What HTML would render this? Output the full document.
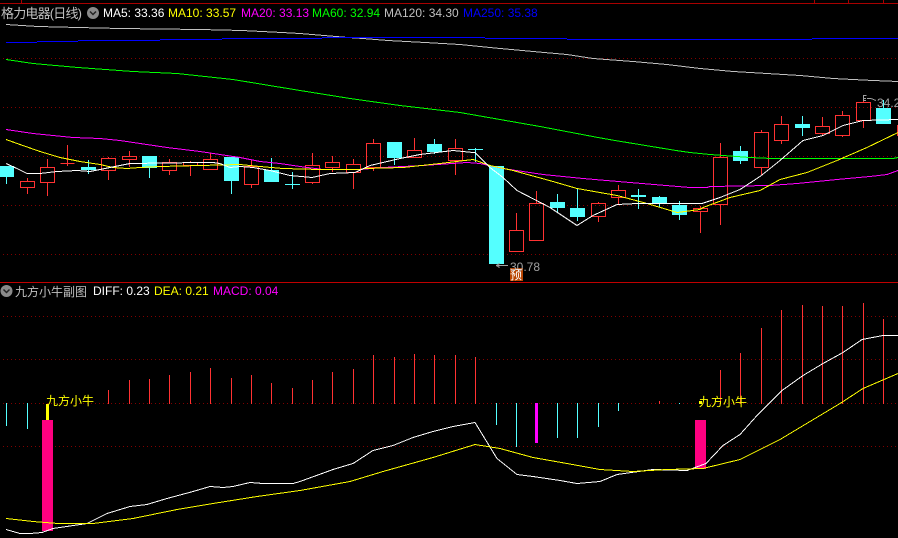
<!DOCTYPE html>
<html lang="zh"><head><meta charset="utf-8"><title>格力电器(日线)</title>
<style>
html,body{margin:0;padding:0;background:#000;width:898px;height:538px;overflow:hidden}
svg{display:block;position:absolute;left:0;top:0}
text{font-family:"Liberation Sans","WenQuanYi Zen Hei","Noto Sans CJK SC",sans-serif;font-size:12px}
.c{font-size:13px}
polyline{fill:none;stroke-width:1}
</style></head><body>
<svg width="898" height="538" viewBox="0 0 898 538" xmlns="http://www.w3.org/2000/svg">
<rect width="898" height="538" fill="#000"/>
<g shape-rendering="crispEdges">
<!-- frame -->
<path d="M0 3.5H898M21.5 0V3M814.5 0V3M848.5 0V3M883.5 0V3" stroke="#a80000" fill="none"/>
<path d="M0 282.5H898" stroke="#c00000" fill="none"/>
<!-- grid -->
<path d="M3 58.5H898M3 107.5H898M3 156.5H898M3 205.5H898M3 254.5H898M3 316.5H898M3 359.5H898M3 403.5H898M3 446.5H898" stroke="#800000" stroke-dasharray="1 3" fill="none"/>
<!-- red candles -->
<path fill="none" stroke="#ff3232" d="M20.5 181.5h14v6h-14zM27.5 178v3M27.5 187v7
M40.5 167.5h14v15h-14zM47.5 159v8M47.5 182v14
M60.5 163.5h14M67.5 145v21
M101.5 158.5h14v12h-14zM108.5 157v1M108.5 170v10
M122.5 156.5h14v3h-14zM129.5 151v5M129.5 159v8
M162.5 162.5h14v8h-14zM169.5 159v3M169.5 170v5
M183.5 162.5h14v3h-14zM190.5 161v1M190.5 165v11
M203.5 159.5h14v10h-14zM210.5 153v6
M244.5 166.5h14v18h-14zM251.5 160v6M251.5 184v4
M305.5 165.5h14v17h-14zM312.5 153v12M312.5 182v2
M325.5 162.5h14v5h-14zM332.5 156v6M332.5 167v5
M346.5 164.5h14v8h-14zM353.5 159v5M353.5 172v17
M366.5 143.5h14v24h-14zM373.5 139v4M373.5 167v4
M407.5 150.5h14v7h-14zM414.5 138v12
M448.5 148.5h14v12h-14zM455.5 139v9M455.5 160v15
M509.5 230.5h14v21h-14zM516.5 213v17
M529.5 203.5h14v37h-14zM536.5 191v12
M591.5 203.5h14v13h-14zM598.5 202v1M598.5 216v6
M611.5 190.5h14v7h-14zM618.5 185v5M618.5 197v8
M693.5 208.5h14v3h-14zM700.5 206v2M700.5 211v22
M713.5 157.5h14v47h-14zM720.5 143v14M720.5 204v21
M754.5 132.5h14v35h-14zM761.5 130v2M761.5 167v8
M774.5 124.5h14v16h-14zM781.5 116v8M781.5 140v4
M815.5 126.5h14v7h-14zM822.5 117v9M822.5 133v3
M835.5 115.5h14v20h-14zM842.5 111v4M842.5 135v2
M856.5 102.5h14v18h-14zM863.5 97v5M863.5 120v8
M897.5 125v11"/>
<!-- cyan candles -->
<path fill="#54ffff" d="M-1 166h15v11h-15zM6 177h1v7h-1z
M81 167h15v3h-15zM88 160h1v14h-1z
M142 156h15v12h-15zM149 168h1v10h-1z
M224 157h15v24h-15zM231 181h1v13h-1z
M264 170h15v12h-15zM271 158h1v12h-1z
M285 184h15v1h-15zM292 172h1v17h-1z
M387 142h15v16h-15zM394 158h1v7h-1z
M427 144h15v8h-15zM434 139h1v15h-1z
M468 149h15v1h-15zM475 148h1v14h-1z
M489 166h15v98h-15z
M550 202h15v6h-15zM557 194h1v19h-1z
M570 208h15v9h-15zM577 188h1v33h-1z
M631 195h15v2h-15zM638 189h1v20h-1z
M652 197h15v7h-15zM659 196h1v11h-1z
M672 205h15v10h-15zM679 201h1v19h-1z
M733 151h15v10h-15zM740 146h1v18h-1z
M795 124h15v4h-15zM802 116h1v20h-1z
M876 108h15v16h-15zM883 100h1v8h-1z"/>
<!-- MA lines -->
<g transform="translate(0 .5)">
<polyline stroke="#c0c0c0" points="6,24 38,26 78,27 120,28 200,29 242,30 282,32 300,33 348,37 363,38 388,40 425,42 460,44 500,48 533,51 567,54 593,58 633,61 667,64 700,68 733,71 767,73 800,75 833,78 873,80 898,81"/>
</g>
<path fill="#0000ff" d="M6 42h31v1h-31zM37 41h41v1h-41zM78 40h82v1h-82zM160 39h62v1h-62zM222 38h100v1h-100zM322 37h163v1h-163zM485 38h82v1h-82zM567 39h245v1h-245zM812 38h86v1h-86z"/>
<g transform="translate(0 .5)">
<polyline stroke="#00ff00" points="6,59 33,63 78,67 133,71 177,73 233,79 300,90 350,98 400,105 460,112 500,119 540,126 598,137 615,140 676,150 690,152 710,154 750,157 772,158 893,158 898,157"/>
<polyline stroke="#ff00ff" points="6,129 33,133 73,137 100,138 120,140 140,143 167,147 200,151 220,154 240,157 260,161 280,163 300,166 323,169 360,169 383,167 423,165 467,162 480,163 503,168 543,174 583,178 630,182 690,187 707,187 710,186 770,185 797,183 837,179 870,176 887,174 898,170"/>
<polyline stroke="#ffff00" points="6,139 20,144 40,151 60,157 80,161 100,164 113,167 127,168 140,167 160,166 200,165 240,164 260,166 283,168 320,169 360,169 365,168 403,167 440,163 473,159 490,165 513,170 553,181 577,188 617,195 647,203 677,212 700,209 703,207 730,197 760,190 780,179 807,172 837,160 867,147 898,132"/>
<polyline stroke="#ffffff" points="6,163 17,168 27,173 40,173 57,171 77,170 90,171 100,169 115,166 130,163 200,162 213,162 220,163 230,167 240,166 253,167 270,170 290,175 312,177 330,173 355,172 370,165 400,158 420,154 453,150 473,152 475,152 490,167 503,177 517,190 550,207 577,225 593,215 617,204 637,203 690,203 702,203 720,197 740,189 760,176 780,160 803,140 823,135 843,125 863,120 898,119"/>
</g>
<!-- price arrows -->
<path d="M496 265.5H508M496.5 265.5l3-2M496.5 265.5l3 2M863.5 95.5h3M863.5 95v6M863 98.5h3M863 100.5h3M867 98.5l4 .01 5 2" stroke="#a0a0a0" fill="none"/>
<rect x="510" y="268" width="13" height="13" fill="#b84400"/>
<!-- MACD bars -->
<path fill="none" stroke="#ff3232" d="M108.5 390V404M129.5 380V404M149.5 379V404M169.5 375V404M190.5 372V404M210.5 368V404M231.5 378V404M251.5 375V404M271.5 383V404M292.5 388V404M312.5 380V404M332.5 372V404M353.5 369V404M373.5 355V404M394.5 357V404M414.5 354V404M434.5 355V404M455.5 355V404M475.5 357V404M659.5 401V404M720.5 370V404M740.5 353V404M761.5 328V404M781.5 310V404M802.5 305V404M822.5 306V404M842.5 306V404M863.5 303V404M883.5 319V404"/>
<path fill="none" stroke="#54ffff" d="M6.5 403V426M27.5 403V429M496.5 403V425M516.5 403V447M557.5 403V438M577.5 403V438M598.5 403V427M618.5 403V411M679.5 403V404"/>
<rect x="535" y="403" width="3" height="40" fill="#ff00ff"/>
<rect x="46" y="404" width="3" height="16" fill="#ffff00"/>
<rect x="42" y="420" width="11" height="111" fill="#ff0080"/>
<rect x="695" y="420" width="11" height="49" fill="#ff0080"/>
<rect x="699" y="401" width="3" height="3" fill="#ffff00"/>
<g transform="translate(0 .5)">
<polyline stroke="#ffffff" points="6,529 20,533 30,533 42,532 53,528 87,523 107,513 130,506 147,504 167,498 193,491 210,486 223,487 233,486 250,482 263,483 293,483 300,481 333,469 353,463 373,450 393,445 413,437 433,431 453,426 475,422 497,458 517,474 533,476 560,480 577,483 600,481 617,474 653,469 687,470 706,463 723,445 740,434 757,415 782,390 803,375 823,363 843,352 862,339 883,335 898,335"/>
<polyline stroke="#ffff00" points="6,518 33,521 58,523 93,523 133,518 177,509 213,503 257,496 300,490 350,481 383,471 433,457 475,444 500,448 533,457 567,463 600,469 633,471 667,469 703,468 740,459 780,439 840,403 863,388 898,373"/>
</g>
</g>
<!-- title icons -->
<circle cx="93" cy="13" r="6" fill="#8a8a8a"/><path d="M90 11.5l3 3 3-3" stroke="#222" stroke-width="1.5" fill="none"/>
<circle cx="6.5" cy="291" r="6" fill="#8a8a8a"/><path d="M3.5 289.5l3 3 3-3" stroke="#222" stroke-width="1.5" fill="none"/>
<!-- titles -->
<text class="c" x="1" y="18" fill="#c0c0c0" textLength="81" lengthAdjust="spacing">格力电器(日线)</text>
<text x="103" y="17" fill="#ffffff">MA5: 33.36</text>
<text x="168" y="17" fill="#ffff00">MA10: 33.57</text>
<text x="241" y="17" fill="#ff00ff">MA20: 33.13</text>
<text x="312" y="17" fill="#00ff00">MA60: 32.94</text>
<text x="384" y="17" fill="#c0c0c0">MA120: 34.30</text>
<text x="463" y="17" fill="#0000ff">MA250: 35.38</text>
<text x="15" y="296" class="c" fill="#c0c0c0" style="font-size:12px">九方小牛副图</text>
<text x="93" y="295" fill="#ffffff">DIFF: 0.23</text>
<text x="154" y="295" fill="#ffff00">DEA: 0.21</text>
<text x="213" y="295" fill="#ff00ff">MACD: 0.04</text>
<text x="46" y="405" fill="#ffff00">九方小牛</text>
<text x="699" y="406" fill="#ffff00">九方小牛</text>
<text x="510" y="271" fill="#a0a0a0">30.78</text>
<text x="877" y="107" fill="#a0a0a0">34.2</text>
<text x="510" y="279" fill="#ffffff">预</text>
</svg>
</body></html>
